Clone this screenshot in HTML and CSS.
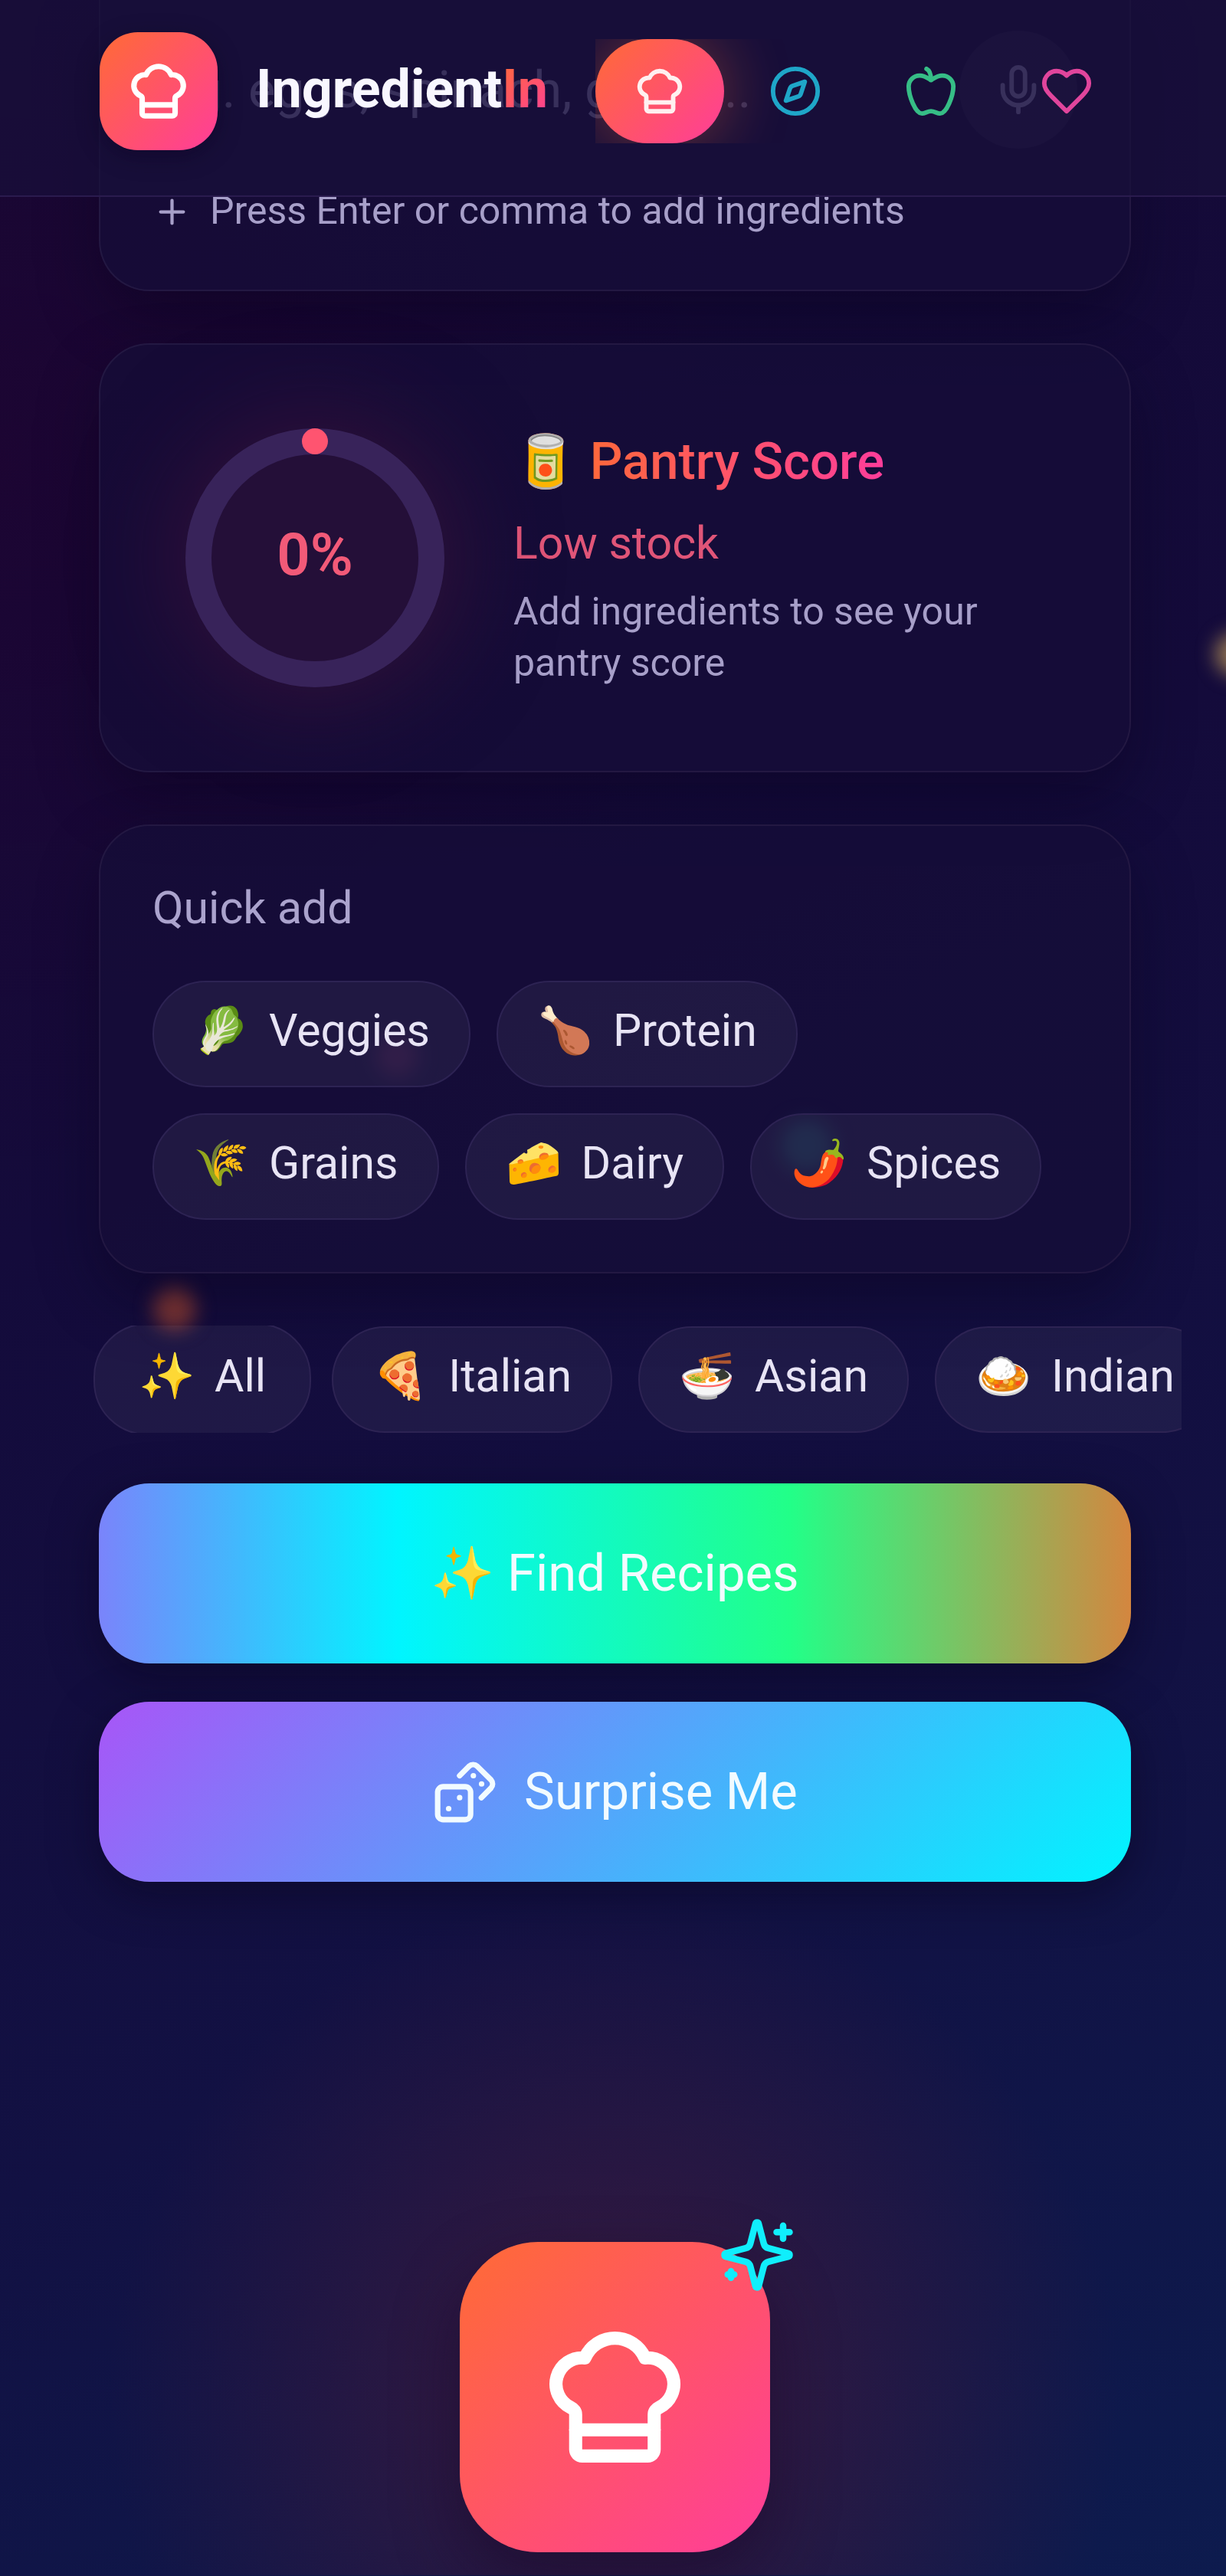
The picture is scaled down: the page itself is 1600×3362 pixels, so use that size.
FILE: index.html
```html
<!DOCTYPE html>
<html lang="en">

<head>
    <meta charset="UTF-8">
    <meta name="viewport" content="width=device-width, initial-scale=1.0">
    <title>IngredientIn</title>
    <link rel="stylesheet" href="styles.css">
</head>

<body>
    <!-- Shared icons -->
    <svg class="icon-defs" aria-hidden="true">
        <symbol id="icon-chef" viewBox="0 0 24 24">
            <path d="M17 21a1 1 0 0 0 1-1v-5.35c0-.457.316-.844.727-1.041a4 4 0 0 0-2.134-7.589 5 5 0 0 0-9.186 0 4 4 0 0 0-2.134 7.588c.411.198.727.585.727 1.041V20a1 1 0 0 0 1 1Z" />
            <path d="M6 17h12" />
        </symbol>
    </svg>

    <div class="bubble bubble-gold"></div>
    <div class="bubble bubble-orange"></div>
    <div class="bubble bubble-pink"></div>
    <div class="bubble bubble-cyan"></div>

    <header class="header">
        <a class="brand" href="#">
            <span class="brand-logo"><svg class="icon icon-lg"><use href="#icon-chef" /></svg></span>
            <span class="brand-name">Ingredient<span class="brand-accent">In</span></span>
        </a>
        <nav class="nav">
            <a class="nav-link active" href="#" aria-label="Recipes"><svg class="icon icon-md"><use href="#icon-chef" /></svg></a>
            <a class="nav-link explore" href="#" aria-label="Explore">
                <svg class="icon icon-md" viewBox="0 0 24 24">
                    <path d="m16.24 7.76-1.804 5.411a2 2 0 0 1-1.265 1.265L7.76 16.24l1.804-5.411a2 2 0 0 1 1.265-1.265z" />
                    <circle cx="12" cy="12" r="10" />
                </svg>
            </a>
            <a class="nav-link nutrition" href="#" aria-label="Nutrition">
                <svg class="icon icon-md" viewBox="0 0 24 24">
                    <path d="M12 20.94c1.5 0 2.75 1.06 4 1.06 3 0 6-8 6-12.22A4.91 4.91 0 0 0 17 5c-2.22 0-4 1.44-5 2-1-.56-2.78-2-5-2a4.9 4.9 0 0 0-5 4.78C2 14 5 22 8 22c1.25 0 2.5-1.06 4-1.06Z" />
                    <path d="M10 2c1 .5 2 2 2 5" />
                </svg>
            </a>
            <a class="nav-link favorites" href="#" aria-label="Favorites">
                <svg class="icon icon-md" viewBox="0 0 24 24">
                    <path d="M19 14c1.49-1.46 3-3.21 3-5.5A5.5 5.5 0 0 0 16.5 3c-1.76 0-3 .5-4.5 2-1.5-1.5-2.74-2-4.5-2A5.5 5.5 0 0 0 2 8.5c0 2.3 1.5 4.05 3 5.5l7 7Z" />
                </svg>
            </a>
        </nav>
    </header>

    <main class="container">
        <section class="card search">
            <div class="search-row">
                <input class="search-input" type="text" placeholder="e.g. eggs, spinach, garlic..." aria-label="Ingredients">
                <button class="mic" type="button" aria-label="Speak ingredients">
                    <svg class="icon icon-md" viewBox="0 0 24 24">
                        <path d="M12 2a3 3 0 0 0-3 3v7a3 3 0 0 0 6 0V5a3 3 0 0 0-3-3Z" />
                        <path d="M19 10v2a7 7 0 0 1-14 0v-2" />
                        <path d="M12 19v3" />
                    </svg>
                </button>
            </div>
            <p class="hint">
                <svg class="icon icon-sm" viewBox="0 0 24 24"><path d="M5 12h14M12 5v14" /></svg>
                <span>Press Enter or comma to add ingredients</span>
            </p>
        </section>

        <section class="card pantry">
            <div class="score">
                <svg class="score-ring" viewBox="0 0 338 338">
                    <circle class="score-track" cx="169" cy="169" r="152" />
                    <circle class="score-dot" cx="169" cy="17" r="17" />
                </svg>
                <span class="score-value">0%</span>
            </div>
            <div class="pantry-info">
                <h2 class="pantry-title"><span class="emoji">🥫</span> Pantry Score</h2>
                <p class="pantry-status">Low stock</p>
                <p class="pantry-text">Add ingredients to see your pantry score</p>
            </div>
        </section>

        <section class="card quick">
            <h3 class="quick-title">Quick add</h3>
            <div class="chips">
                <button class="chip" type="button"><span>🥬</span>Veggies</button>
                <button class="chip" type="button"><span>🍗</span>Protein</button>
                <button class="chip" type="button"><span>🌾</span>Grains</button>
                <button class="chip" type="button"><span>🧀</span>Dairy</button>
                <button class="chip" type="button"><span>🌶️</span>Spices</button>
            </div>
        </section>

        <div class="cuisines">
            <button class="chip selected" type="button"><span>✨</span>All</button>
            <button class="chip" type="button"><span>🍕</span>Italian</button>
            <button class="chip" type="button"><span>🍜</span>Asian</button>
            <button class="chip" type="button"><span>🍛</span>Indian</button>
        </div>

        <div class="actions">
            <button class="btn btn-find" type="button">✨ Find Recipes</button>
            <button class="btn btn-surprise" type="button">
                <svg class="icon icon-lg" viewBox="0 0 24 24">
                    <rect width="12" height="12" x="2" y="10" rx="2" ry="2" />
                    <path d="m17.92 14 3.5-3.5a2.24 2.24 0 0 0 0-3l-5-4.92a2.24 2.24 0 0 0-3 0L10 6" />
                    <path d="M6 18h.01M10 14h.01M15 6h.01M18 9h.01" />
                </svg>
                Surprise Me
            </button>
        </div>

        <div class="empty">
            <div class="empty-logo">
                <svg class="icon icon-xl"><use href="#icon-chef" /></svg>
                <svg class="icon sparkles" viewBox="0 0 24 24">
                    <path d="M9.937 15.5A2 2 0 0 0 8.5 14.063l-6.135-1.582a.5.5 0 0 1 0-.962L8.5 9.936A2 2 0 0 0 9.937 8.5l1.582-6.135a.5.5 0 0 1 .963 0L14.063 8.5A2 2 0 0 0 15.5 9.937l6.135 1.581a.5.5 0 0 1 0 .964L15.5 14.063a2 2 0 0 0-1.437 1.437l-1.582 6.135a.5.5 0 0 1-.963 0z" />
                    <path d="M20 3v4M22 5h-4M4 17v2M5 18H3" />
                </svg>
            </div>
        </div>
    </main>
</body>

</html>
```

FILE: styles.css
```css
* {
    box-sizing: border-box;
    margin: 0;
    padding: 0;
}

body {
    position: relative;
    min-height: 100vh;
    overflow-x: hidden;
    font-family: Roboto, sans-serif;
    font-size: 59px;
    line-height: 1.2;
    color: #e8e4f5;
    background:
        radial-gradient(circle at 0 600px, rgba(36, 0, 46, 0.5), transparent 1000px),
        linear-gradient(155deg, #150935 0%, #140b3b 40%, #121143 70%, #0d1b4e 100%);
}

button,
input {
    font: inherit;
    color: inherit;
}

button {
    cursor: pointer;
}

a {
    color: inherit;
    text-decoration: none;
}

/* Icons */
.icon-defs {
    position: absolute;
    width: 0;
    height: 0;
}

.icon {
    flex-shrink: 0;
    fill: none;
    stroke: currentColor;
    stroke-width: 2;
    stroke-linecap: round;
    stroke-linejoin: round;
}

.icon-sm {
    width: 51px;
    height: 51px;
}

.icon-md {
    width: 70px;
    height: 70px;
}

.icon-lg {
    width: 86px;
    height: 86px;
}

.icon-xl {
    width: 205px;
    height: 205px;
}

/* Floating background lights */
.bubble {
    position: absolute;
    width: 56px;
    height: 56px;
    border-radius: 50%;
    filter: blur(12px);
    pointer-events: none;
}

.bubble-gold {
    top: 826px;
    right: -42px;
    background: #8f7250;
}

.bubble-orange {
    top: 1680px;
    left: 200px;
    background: #7c3534;
}

.bubble-pink {
    top: 1350px;
    left: 490px;
    background: #5a2058;
}

.bubble-cyan {
    top: 1460px;
    left: 1018px;
    width: 70px;
    height: 70px;
    background: #1a5a6c;
}

/* Header */
.header {
    position: fixed;
    top: 0;
    left: 0;
    right: 0;
    z-index: 10;
    display: flex;
    align-items: center;
    justify-content: space-between;
    height: 257px;
    padding: 0 124px 18px 130px;
    background: rgba(24, 15, 58, 0.7);
    border-bottom: 2px solid #2a1b4e;
}

.brand {
    display: flex;
    align-items: center;
    gap: 50px;
}

.brand-logo {
    display: flex;
    align-items: center;
    justify-content: center;
    width: 154px;
    height: 154px;
    color: #fff;
    background: linear-gradient(135deg, #ff6b35, #ff3d9a);
    border-radius: 50px;
    box-shadow: 0 8px 30px rgba(10, 0, 30, 0.4);
}

.brand-name {
    padding-bottom: 6px;
    font-size: 70px;
    font-weight: 700;
    color: #f8f7ff;
}

.brand-accent {
    color: transparent;
    background: linear-gradient(135deg, #ff6b35, #ff3d9a);
    -webkit-background-clip: text;
    background-clip: text;
}

.nav {
    display: flex;
    gap: 9px;
    overflow: hidden;
}

.nav-link {
    display: flex;
    align-items: center;
    justify-content: center;
    width: 168px;
    height: 136px;
    border-radius: 68px;
}

.nav-link.active {
    color: #fff0f0;
    background: linear-gradient(135deg, #ff6b35, #ff3d9a);
    box-shadow: 0 0 85px rgba(255, 107, 53, 0.4);
}

.explore {
    color: #1fa6c8;
}

.nutrition {
    color: #36bd86;
}

.favorites {
    color: #e0459c;
}

/* Cards */
.container {
    position: relative;
    padding: 0 124px 0 129px;
}

.card {
    margin-bottom: 68px;
    padding: 68px;
    background: rgba(22, 14, 56, 0.75);
    border: 2px solid #231842;
    border-radius: 66px;
    box-shadow: 0 34px 80px rgba(8, 2, 24, 0.4);
}

.search {
    padding-top: 40px;
    border-top: none;
    border-top-left-radius: 0;
    border-top-right-radius: 0;
}

.search-row {
    display: flex;
    align-items: center;
    height: 154px;
    margin-bottom: 48px;
}

.search-input {
    flex: 1;
    min-width: 0;
    font-size: 67px;
    background: none;
    border: none;
    outline: none;
}

.search-input::placeholder {
    color: #847ca8;
    opacity: 1;
}

.mic {
    display: flex;
    align-items: center;
    justify-content: center;
    width: 154px;
    height: 154px;
    color: #847ca8;
    background: rgba(255, 255, 255, 0.06);
    border: none;
    border-radius: 50%;
}

.hint {
    display: flex;
    align-items: center;
    gap: 24px;
    height: 68px;
    font-size: 50px;
    color: #a79fc9;
}

.hint span {
    padding-bottom: 2px;
}

/* Pantry score */
.pantry {
    display: flex;
    align-items: center;
    gap: 90px;
    min-height: 560px;
    padding-left: 111px;
}

.score {
    position: relative;
    flex-shrink: 0;
    display: flex;
    align-items: center;
    justify-content: center;
    width: 338px;
    height: 338px;
    border-radius: 50%;
    background: #240f38;
    box-shadow: 0 0 130px 10px rgba(80, 22, 60, 0.5);
}

.score-ring {
    position: absolute;
    inset: 0;
}

.score-track {
    fill: none;
    stroke: #38235a;
    stroke-width: 34;
}

.score-dot {
    fill: #ff5470;
}

.score-value {
    position: relative;
    padding-bottom: 6px;
    font-size: 76px;
    font-weight: 600;
    color: #f25a78;
}

.pantry-info {
    flex: 1;
}

.pantry-title {
    width: fit-content;
    margin-bottom: 24px;
    font-size: 67px;
    font-weight: 500;
    line-height: 88px;
    color: transparent;
    background: linear-gradient(90deg, #ff6b35 15%, #ff3d9a 100%);
    -webkit-background-clip: text;
    background-clip: text;
}

.emoji {
    color: #fff;
}

.pantry-status {
    margin-bottom: 17px;
    line-height: 78px;
    color: #e05578;
}

.pantry-text {
    font-size: 50px;
    line-height: 67px;
    color: #a79fc9;
}

/* Chips */
.quick-title {
    margin-bottom: 56px;
    font-size: 59px;
    font-weight: 400;
    line-height: 78px;
    color: #aba3cd;
}

.chips {
    display: flex;
    flex-wrap: wrap;
    gap: 34px;
}

.chip {
    flex-shrink: 0;
    display: flex;
    align-items: center;
    gap: 26px;
    height: 139px;
    padding: 0 51px 8px;
    white-space: nowrap;
    background: rgba(255, 255, 255, 0.05);
    border: 2px solid #2d2353;
    border-radius: 70px;
}

.cuisines {
    display: flex;
    align-items: center;
    gap: 34px;
    height: 140px;
    margin: 0 -66px 66px;
    padding: 0 66px;
    overflow: hidden;
}

.chip.selected {
    height: 146px;
    margin: 0 -7px;
    padding: 0 57px 8px;
}

/* Buttons */
.actions {
    display: flex;
    flex-direction: column;
    gap: 50px;
}

.btn {
    display: flex;
    align-items: center;
    justify-content: center;
    gap: 34px;
    height: 235px;
    font-size: 67px;
    color: #f2fbff;
    border: none;
    border-radius: 66px;
    box-shadow: 0 16px 60px rgba(8, 4, 28, 0.5);
}

.btn-find {
    background: linear-gradient(90deg, #7a84fb 0%, #00f5ff 29%, #22ff88 67%, #d4863f 100%);
}

.btn-surprise {
    background: linear-gradient(135deg, #a855f7, #00f5ff);
}

/* Empty state */
.empty {
    display: flex;
    justify-content: center;
    padding: 470px 0 30px;
    background: radial-gradient(circle at 50% 672px, rgba(60, 26, 62, 0.7) 180px, transparent 660px);
}

.empty-logo {
    position: relative;
    display: flex;
    align-items: center;
    justify-content: center;
    width: 405px;
    height: 405px;
    color: #fff;
    background: linear-gradient(135deg, #ff6b35, #ff3d9a);
    border-radius: 102px;
    box-shadow: 0 34px 80px rgba(20, 5, 40, 0.5);
}

.sparkles {
    position: absolute;
    top: -34px;
    right: -34px;
    width: 102px;
    height: 102px;
    color: #10eefc;
}
```
